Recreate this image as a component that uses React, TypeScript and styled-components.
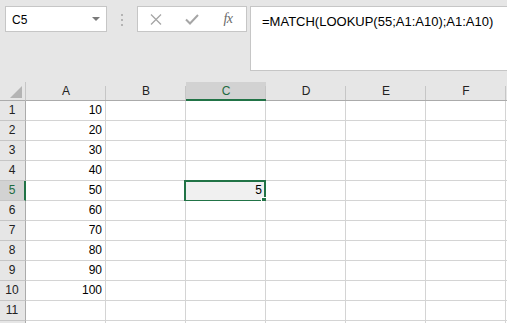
import React from "react";
import styled, { createGlobalStyle, css } from "styled-components";

const Global = createGlobalStyle`
  html, body { margin: 0; padding: 0; background: #e6e6e6; }
  body { font-family: "Liberation Sans", Arial, sans-serif; }
`;

const Page = styled.div`
  width: 507px;
  height: 323px;
  overflow: hidden;
  background: #e6e6e6;
  display: flex;
  flex-direction: column;
`;

const FormulaBar = styled.div`
  height: 82px;
  box-sizing: border-box;
  padding: 6px 0 0 5px;
  display: flex;
  align-items: flex-start;
  flex-shrink: 0;
`;

const NameBox = styled.div`
  width: 102px;
  height: 26px;
  box-sizing: border-box;
  border: 1px solid #c6c6c6;
  background: #fff;
  display: flex;
  align-items: center;
  justify-content: space-between;
  padding: 1px 6px 0 6px;
  font-size: 12px;
  color: #000;
`;

const DropArrow = styled.span`
  width: 0;
  height: 0;
  border-left: 4px solid transparent;
  border-right: 4px solid transparent;
  border-top: 4px solid #7a7a7a;
  margin-top: -2px;
`;

const Grip = styled.div`
  width: 30px;
  height: 26px;
  display: flex;
  flex-direction: column;
  align-items: center;
  justify-content: center;
  gap: 3px;
  padding-top: 1px;
  box-sizing: border-box;
`;

const GripDot = styled.span`
  width: 2px;
  height: 2px;
  background: #b4b4b4;
`;

const FxBox = styled.div`
  width: 110px;
  height: 26px;
  box-sizing: border-box;
  border: 1px solid #c6c6c6;
  background: #fff;
  display: flex;
`;

const FxSlot = styled.div`
  width: 36px;
  display: flex;
  align-items: center;
  justify-content: center;
`;

const FxText = styled.span`
  font-family: "Liberation Serif", "Times New Roman", serif;
  font-style: italic;
  font-size: 14px;
  color: #6a6a6a;
  letter-spacing: -0.5px;
  margin-top: -1px;
`;

const FormulaInput = styled.div`
  flex: 1;
  margin-left: 3px;
  height: 65px;
  box-sizing: border-box;
  border: 1px solid #c6c6c6;
  border-right: none;
  background: #fff;
  padding: 7px 0 0 11px;
  font-size: 13px;
  line-height: 16px;
  color: #000;
  white-space: nowrap;
`;

const Grid = styled.div`
  display: grid;
  grid-template-columns: 26px repeat(6, 80px) 1fr;
  grid-template-rows: 19px;
  grid-auto-rows: 20px;
  background: #fff;
  flex: 1;
`;

const Corner = styled.div`
  background: #e6e6e6;
  border-right: 1px solid #c6c6c6;
  border-bottom: 1px solid #ababab;
  box-sizing: border-box;
  display: flex;
  align-items: flex-end;
  justify-content: flex-end;
  padding: 0 3px 2px 0;
`;

const CornerTriangle = styled.span`
  width: 0;
  height: 0;
  border-left: 12px solid transparent;
  border-bottom: 12px solid #b4b4b4;
`;

const ColHeader = styled.div<{ $active?: boolean; $last?: boolean }>`
  position: relative;
  box-sizing: border-box;
  background: ${(p) => (p.$active ? "#d2d2d2" : "#e6e6e6")};
  color: ${(p) => (p.$active ? "#1e6b41" : "#222")};
  border-bottom: ${(p) => (p.$active ? "2px solid #217346" : "1px solid #ababab")};
  font-size: 12px;
  display: flex;
  align-items: center;
  justify-content: center;
  padding-top: ${(p) => (p.$active ? "1px" : "0")};
  ${(p) =>
    !p.$last &&
    css`
      &::after {
        content: "";
        position: absolute;
        right: 0;
        top: 4px;
        bottom: 0;
        width: 1px;
        background: #c6c6c6;
      }
    `}
`;

const RowHeader = styled.div<{ $active?: boolean }>`
  box-sizing: border-box;
  background: ${(p) => (p.$active ? "#d2d2d2" : "#e6e6e6")};
  color: ${(p) => (p.$active ? "#1e6b41" : "#222")};
  border-right: ${(p) => (p.$active ? "2px solid #217346" : "1px solid #ababab")};
  border-bottom: 1px solid #c6c6c6;
  font-size: 12px;
  display: flex;
  align-items: flex-end;
  justify-content: center;
  padding: 0 ${(p) => (p.$active ? "0" : "1px")} 3px 0;
`;

const Cell = styled.div<{ $selected?: boolean }>`
  position: relative;
  box-sizing: border-box;
  border-right: 1px solid #d4d4d4;
  border-bottom: 1px solid #d4d4d4;
  background: ${(p) => (p.$selected ? "#f0f0f0" : "#fff")};
  font-size: 12px;
  color: #000;
  display: flex;
  align-items: flex-end;
  justify-content: flex-end;
  padding: 0 3px 3px 0;
`;

const Selection = styled.div`
  position: absolute;
  top: -1px;
  left: -2px;
  right: -1px;
  bottom: -2px;
  border: 2px solid #217346;
  pointer-events: none;
`;

const FillHandle = styled.div`
  position: absolute;
  right: -4px;
  bottom: -4px;
  width: 6px;
  height: 6px;
  background: #217346;
  box-shadow: 0 0 0 1px #fff;
`;

const columns = ["A", "B", "C", "D", "E", "F"];
const values: Record<number, number> = {
  1: 10, 2: 20, 3: 30, 4: 40, 5: 50, 6: 60, 7: 70, 8: 80, 9: 90, 10: 100,
};

const CrossIcon = () => (
  <svg width="12" height="11" viewBox="0 0 12 11">
    <path d="M1 0.5 L11 10.5 M11 0.5 L1 10.5" stroke="#a6a6a6" strokeWidth="1.3" fill="none" />
  </svg>
);

const CheckIcon = () => (
  <svg width="14" height="11" viewBox="0 0 14 11">
    <path d="M1 5.5 L5 9.5 L13 1" stroke="#a6a6a6" strokeWidth="2" fill="none" />
  </svg>
);

export default function App() {
  const rows = Array.from({ length: 12 }, (_, i) => i + 1);
  return (
    <Page>
      <Global />
      <FormulaBar>
        <NameBox>
          <span>C5</span>
          <DropArrow />
        </NameBox>
        <Grip>
          <GripDot />
          <GripDot />
          <GripDot />
        </Grip>
        <FxBox>
          <FxSlot>
            <CrossIcon />
          </FxSlot>
          <FxSlot>
            <CheckIcon />
          </FxSlot>
          <FxSlot>
            <FxText>fx</FxText>
          </FxSlot>
        </FxBox>
        <FormulaInput>=MATCH(LOOKUP(55;A1:A10);A1:A10)</FormulaInput>
      </FormulaBar>
      <Grid>
        <Corner>
          <CornerTriangle />
        </Corner>
        {columns.map((c) => (
          <ColHeader key={c} $active={c === "C"}>
            {c}
          </ColHeader>
        ))}
        <ColHeader $last />
        {rows.map((r) => (
          <React.Fragment key={r}>
            <RowHeader $active={r === 5}>{r <= 11 ? r : null}</RowHeader>
            {columns.map((c) => {
              const sel = r === 5 && c === "C";
              let v: React.ReactNode = null;
              if (c === "A" && values[r] !== undefined) v = values[r];
              if (sel) v = 5;
              return (
                <Cell key={c} $selected={sel}>
                  {v}
                  {sel && (
                    <Selection>
                      <FillHandle />
                    </Selection>
                  )}
                </Cell>
              );
            })}
            <Cell />
          </React.Fragment>
        ))}
      </Grid>
    </Page>
  );
}
